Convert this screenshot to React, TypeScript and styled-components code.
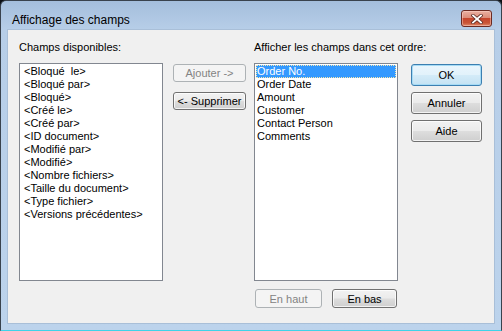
import React from "react";
import styled, { createGlobalStyle, css } from "styled-components";

const GlobalStyle = createGlobalStyle`
  html, body {
    margin: 0;
    padding: 0;
    background: #0b0f14;
  }
  body {
    font-family: "Liberation Sans", Arial, sans-serif;
    font-size: 11px;
    color: #000;
  }
`;

const Window = styled.div`
  box-sizing: border-box;
  width: 502px;
  height: 331px;
  border: 1px solid #39424d;
  border-bottom-color: #3fd3e8;
  border-radius: 6px 6px 0 0;
  background: linear-gradient(180deg, #a4bedc 0px, #b7cee8 29px, #bcd3ec 100%);
  display: flex;
  flex-direction: column;
  overflow: hidden;
`;

const TitleBar = styled.div`
  height: 29px;
  flex: none;
  display: flex;
  align-items: flex-start;
  justify-content: space-between;
  padding: 0 9px 0 11px;
  box-sizing: border-box;
`;

const Title = styled.div`
  padding-top: 12px;
  font-size: 12px;
  line-height: 14px;
  color: #000;
`;

const CloseButton = styled.div`
  margin-top: 9px;
  width: 31px;
  height: 17px;
  box-sizing: border-box;
  border: 1px solid #6b2a22;
  border-radius: 3px;
  background: linear-gradient(
    180deg,
    #eab0a2 0%,
    #dc8d7a 45%,
    #c6462d 50%,
    #c95536 80%,
    #e08a6c 100%
  );
  box-shadow: inset 0 0 0 1px rgba(255, 220, 210, 0.45);
  display: flex;
  align-items: center;
  justify-content: center;
`;

const Frame = styled.div`
  flex: 1;
  padding: 0 7px 7px 7px;
  display: flex;
`;

const Client = styled.div`
  flex: 1;
  background: #f0f0f0;
  display: flex;
  align-items: flex-start;
  padding: 11px 0 0 11px;
  box-shadow: 0 0 0 1px #a9bfd8;
`;

const Column = styled.div`
  width: 144px;
  display: flex;
  flex-direction: column;
`;

const FieldLabel = styled.div`
  height: 22px;
  line-height: 13px;
  white-space: nowrap;
`;

const ListBox = styled.div`
  box-sizing: border-box;
  width: 144px;
  height: 218px;
  background: #fff;
  border: 1px solid #828790;
  padding: 1px;
  display: flex;
  flex-direction: column;
`;

const ListItem = styled.div<{ $selected?: boolean; $inset: number }>`
  height: 13px;
  line-height: 13px;
  padding-left: ${(p) => p.$inset}px;
  white-space: pre;
  ${(p) =>
    p.$selected &&
    css`
      background: #3399ff;
      color: #fff;
      outline: 1px dotted #f6e7b0;
      outline-offset: -1px;
    `}
`;

const MoveColumn = styled.div`
  width: 73px;
  margin-left: 10px;
  padding-top: 23px;
  display: flex;
  flex-direction: column;
  gap: 10px;
`;

const RightColumn = styled(Column)`
  margin-left: 8px;
`;

const OrderRow = styled.div`
  margin-top: 8px;
  padding-left: 1px;
  display: flex;
  gap: 10px;
`;

const ActionColumn = styled.div`
  width: 71px;
  margin-left: 13px;
  padding-top: 23px;
  display: flex;
  flex-direction: column;
  gap: 6px;
`;

type Variant = "normal" | "default" | "disabled";

const PushButton = styled.div<{ $variant?: Variant; $w?: number; $h: number }>`
  box-sizing: border-box;
  width: ${(p) => (p.$w ? `${p.$w}px` : "100%")};
  height: ${(p) => p.$h}px;
  border-radius: 3px;
  display: flex;
  align-items: center;
  justify-content: center;
  white-space: nowrap;
  border: 1px solid #707070;
  color: #000;
  background: linear-gradient(180deg, #f2f2f2 0%, #ebebeb 48%, #dddddd 52%, #cfcfcf 100%);
  box-shadow: inset 0 0 0 1px rgba(255, 255, 255, 0.75);
  ${(p) =>
    p.$variant === "default" &&
    css`
      border-color: #3c7fb1;
      background: linear-gradient(180deg, #eaf6fd 0%, #e2f2fb 48%, #d3ebf8 52%, #c4e2f3 100%);
      box-shadow: inset 0 0 0 1px #a6dbf5;
    `}
  ${(p) =>
    p.$variant === "disabled" &&
    css`
      border-color: #adb2b5;
      color: #838383;
      background: #f4f4f4;
      box-shadow: none;
    `}
`;

const available = [
  "<Bloqué  le>",
  "<Bloqué par>",
  "<Bloqué>",
  "<Créé le>",
  "<Créé par>",
  "<ID document>",
  "<Modifié par>",
  "<Modifié>",
  "<Nombre fichiers>",
  "<Taille du document>",
  "<Type fichier>",
  "<Versions précédentes>",
];

const shown = ["Order No.", "Order Date", "Amount", "Customer", "Contact Person", "Comments"];

function CloseGlyph() {
  return (
    <svg width="12" height="10" viewBox="0 0 12 10">
      <path d="M2 1.5 L10 8.5 M10 1.5 L2 8.5" stroke="#5a2a24" strokeWidth="3.4" strokeLinecap="square" />
      <path d="M2 1.5 L10 8.5 M10 1.5 L2 8.5" stroke="#ffffff" strokeWidth="1.8" strokeLinecap="square" />
    </svg>
  );
}

export default function App() {
  return (
    <>
      <GlobalStyle />
      <Window>
        <TitleBar>
          <Title>Affichage des champs</Title>
          <CloseButton>
            <CloseGlyph />
          </CloseButton>
        </TitleBar>
        <Frame>
          <Client>
            <Column>
              <FieldLabel>Champs disponibles:</FieldLabel>
              <ListBox>
                {available.map((f) => (
                  <ListItem key={f} $inset={3}>
                    {f}
                  </ListItem>
                ))}
              </ListBox>
            </Column>

            <MoveColumn>
              <PushButton $variant="disabled" $h={18}>
                Ajouter -&gt;
              </PushButton>
              <PushButton $h={18}>&lt;- Supprimer</PushButton>
            </MoveColumn>

            <RightColumn>
              <FieldLabel>Afficher les champs dans cet ordre:</FieldLabel>
              <ListBox>
                {shown.map((f, i) => (
                  <ListItem key={f} $inset={1} $selected={i === 0}>
                    {f}
                  </ListItem>
                ))}
              </ListBox>
              <OrderRow>
                <PushButton $variant="disabled" $w={67} $h={19}>
                  En haut
                </PushButton>
                <PushButton $w={65} $h={19}>
                  En bas
                </PushButton>
              </OrderRow>
            </RightColumn>

            <ActionColumn>
              <PushButton $variant="default" $h={22}>
                OK
              </PushButton>
              <PushButton $h={22}>Annuler</PushButton>
              <PushButton $h={22}>Aide</PushButton>
            </ActionColumn>
          </Client>
        </Frame>
      </Window>
    </>
  );
}
